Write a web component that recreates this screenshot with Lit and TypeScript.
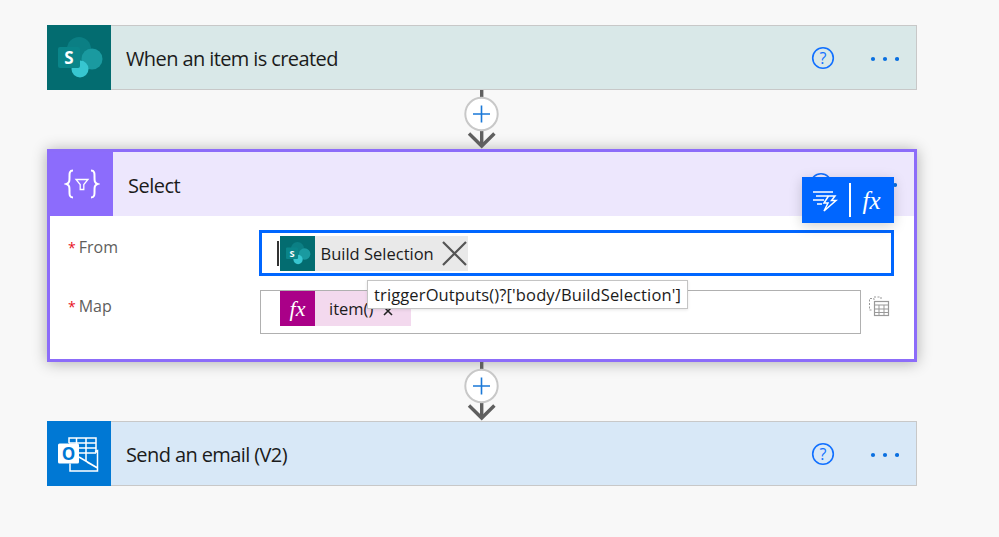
import { LitElement, html, css, svg } from "lit";
import { customElement } from "lit/decorators.js";

const sharepoint = svg`
  <circle cx="32" cy="23" r="12" fill="#0b7f84"/>
  <circle cx="45" cy="33" r="10.5" fill="#1a9aa0"/>
  <circle cx="33" cy="43" r="8.5" fill="#37c6d0"/>
  <rect x="11" y="21" width="22" height="21" rx="2" fill="#0a8589"/>
  <text x="22" y="37.5" text-anchor="middle" font-family="Open Sans" font-weight="700" font-size="17" fill="#fff">S</text>`;

const spIcon = (size: number) => html`<svg class="block" width=${size} height=${size} viewBox="0 0 64 64">${sharepoint}</svg>`;

const actions = html`<svg class="actions" width="88" height="24" viewBox="0 0 88 24">
  <circle cx="12" cy="12" r="10.3" fill="none" stroke="#1170ff" stroke-width="1.6"/>
  <text x="12" y="17.8" text-anchor="middle" font-family="Open Sans" font-size="16" fill="#1170ff">?</text>
  <circle cx="62" cy="13" r="2.1" fill="#0a6fe0"/><circle cx="74" cy="13" r="2.1" fill="#0a6fe0"/><circle cx="86" cy="13" r="2.1" fill="#0a6fe0"/>
</svg>`;

const connector = (h: number) => html`<svg class="connector" width="40" height=${h} viewBox="0 0 40 ${h}">
  <rect x="18" y="0" width="3.4" height="8" fill="#5f5f5f"/>
  <rect x="18" y="40" width="3.4" height="16" fill="#5f5f5f"/>
  <circle cx="19.5" cy="24" r="16.2" fill="#fff" stroke="#c8c8c8" stroke-width="2"/>
  <path d="M11 24h17M19.5 15.5v17" stroke="#1a78d8" stroke-width="1.6" fill="none"/>
  <path d="M7 43.5L19.7 56L32.4 43.5" stroke="#5f5f5f" stroke-width="3.4" fill="none"/>
</svg>`;

@customElement("app-root")
export class AppRoot extends LitElement {
  static styles = css`
    :host { display: block; width: 999px; height: 537px; background: #f8f8f8; overflow: hidden;
      font-family: "Open Sans", "Noto Sans", sans-serif; color: #1b1b1b; }
    .flow { display: flex; flex-direction: column; width: 870px; margin-left: 47px; padding-top: 25px; }
    .block { display: block; }
    .card { box-sizing: border-box; height: 65px; border: 1px solid #c8c8c8; display: flex; align-items: stretch; }
    .card.first { background: #d9e8e8; }
    .card.last { background: #d8e8f7; }
    .iconbox { width: 64px; margin: -1px 0 -1px -1px; display: flex; align-items: center; justify-content: center; flex: none; }
    .teal { background: #036c70; }
    .blue { background: #0078d4; }
    .title { font-size: 20px; line-height: 1; align-self: center; margin-left: 15px; padding-top: 3px; flex: 1; letter-spacing: -0.6px; }
    .select .title { letter-spacing: -0.5px; }
    .actions { align-self: center; margin-right: 17px; display: block; }
    .connector { display: block; align-self: center; position: relative; z-index: 2; }
    .select { position: relative; box-sizing: border-box; height: 213px; border: 3px solid #8c6cf9; background: #fff;
      box-shadow: 0 1px 14px rgba(0,0,0,.3); }
    .select-head { height: 64px; background: #ede7fd; display: flex; }
    .select-head .iconbox { width: 63px; margin: 0; background: #8c6cfc; }
    .select-body { display: grid; grid-template-columns: 209px 1fr; grid-template-rows: 46px 44px; row-gap: 14px; padding-top: 14px; }
    .label { font-size: 16px; color: #605e5c; padding: 6px 0 0 18px; line-height: 20px; }
    .label.top { padding-top: 7px; }
    .label i { color: #e81123; font-style: normal; margin-right: 3px; font-size: 14px; }
    .from { box-sizing: border-box; width: 635px; border: 3px solid #0066ff; display: flex; align-items: center; padding-left: 15px; }
    .caret { width: 1.5px; height: 25px; background: #333; margin-right: 1px; }
    .token { display: flex; align-items: stretch; height: 35px; }
    .token .ticon { width: 35px; display: flex; align-items: center; justify-content: center; }
    .token.sp { background: #e9e9e9; }
    .token.fx { background: #f3d9ee; width: 131px; }
    .token-text { align-self: center; font-size: 16.5px; line-height: 20px; }
    .token.sp .token-text { margin-left: 6px; padding-top: 2px; }
    .token.fx .token-text { margin-left: 14px; }
    .token .x { align-self: center; display: block; }
    .x.big { margin: 0 1px 0 8px; }
    .x.small { margin: 4px 0 0 10px; }
    .map-cell { display: flex; margin-left: 1px; }
    .map { box-sizing: border-box; width: 601px; border: 1px solid #b0b0b0; padding-left: 19px; background: #fff; }
    .fxbox { background: #aa0088; color: #fff; }
    .fxt { font-family: "Liberation Serif", serif; font-style: italic; font-size: 22px; line-height: 1; }
    .cal { margin: 5px 0 0 7px; display: block; }
    .tooltip { position: absolute; left: 317px; top: 128px; height: 29px; box-sizing: border-box; width: 321px; background: #fff;
      border: 1px solid #c4c4c4; font-size: 16.5px; letter-spacing: 0.13px; line-height: 27px; padding-left: 6px; white-space: nowrap; box-shadow: 0 1px 3px rgba(0,0,0,.1); z-index: 3; }
    .pop { position: absolute; left: 752px; top: 25px; width: 92px; height: 46px; background: #0066ff; display: flex; align-items: center;
      box-shadow: 0 3px 12px rgba(0,0,0,.18); z-index: 3; color: #fff; }
    .pop .bolt { margin-left: 10px; display: block; flex: none; }
    .pop .sep { width: 1.5px; height: 34px; background: #fff; margin-left: 11px; }
    .pop .fxt { margin-left: 12px; font-size: 25px; }
  `;

  render() {
    return html`<div class="flow">
      <div class="card first">
        <div class="iconbox teal">${spIcon(64)}</div>
        <div class="title">When an item is created</div>
        ${actions}
      </div>
      ${connector(59)}
      <div class="select">
        <div class="select-head">
          <div class="iconbox">
            <svg class="block" width="36" height="32" viewBox="0 0 36 32" fill="none" stroke="#fff" stroke-width="2">
              <path d="M9 2.5C5 2.5 5.5 6 5.5 9.5C5.5 13 5.5 15 2.5 16C5.5 17 5.5 19 5.5 22.5C5.5 26 5 29.5 9 29.5"/>
              <path d="M27 2.5C31 2.5 30.5 6 30.5 9.5C30.5 13 30.5 15 33.5 16C30.5 17 30.5 19 30.5 22.5C30.5 26 31 29.5 27 29.5"/>
              <path d="M12 11.5H24L19.8 16.5V21.5L16.2 21.5V16.5Z" stroke-width="1.3"/>
            </svg>
          </div>
          <div class="title">Select</div>
          ${actions}
        </div>
        <div class="select-body">
          <div class="label top"><i>*</i>From</div>
          <div class="from">
            <span class="caret"></span>
            <div class="token sp">
              <div class="ticon teal">${spIcon(35)}</div>
              <span class="token-text">Build Selection</span>
              <svg class="x big" width="25" height="25" viewBox="0 0 25 25" stroke="#555" stroke-width="2.2"><path d="M1 1L24 24M24 1L1 24"/></svg>
            </div>
          </div>
          <div class="label"><i>*</i>Map</div>
          <div class="map-cell">
            <div class="map">
              <div class="token fx">
                <div class="ticon fxbox"><span class="fxt">fx</span></div>
                <span class="token-text">item()</span>
                <svg class="x small" width="10" height="10" viewBox="0 0 10 10" stroke="#222" stroke-width="1.6"><path d="M1 1L9 9M9 1L1 9"/></svg>
              </div>
            </div>
            <svg class="cal" width="22" height="22" viewBox="0 0 22 22" fill="none" stroke="#999">
              <path d="M6 5V3.5H1.5V15H4.5" stroke-dasharray="2 1.5"/>
              <path d="M6 2H13V5" stroke-dasharray="2 1.5"/>
              <rect x="6.5" y="6.5" width="14" height="14" stroke-width="1.2"/>
              <path d="M6.5 10H20.5M6.5 14H20.5M6.5 17.5H20.5M11 10V20.5M16 10V20.5" stroke-width="1"/>
            </svg>
          </div>
        </div>
        <div class="tooltip">triggerOutputs()?['body/BuildSelection']</div>
        <div class="pop">
          <svg class="bolt" width="26" height="26" viewBox="0 0 26 26" fill="none" stroke="#fff" stroke-width="1.5">
            <path d="M1 5H21M4 9H16M1 13H12M5 17H10"/>
            <path d="M16.5 9L12 16H16L12 24L24 13.5H19.5L23 9Z"/>
          </svg>
          <span class="sep"></span>
          <span class="fxt">fx</span>
        </div>
      </div>
      ${connector(59)}
      <div class="card last">
        <div class="iconbox blue">
          <svg class="block" width="42" height="38" viewBox="0 0 42 38" fill="none" stroke="#fff" stroke-width="1.5">
            <path d="M11 8V3H38V18M18.5 3V24M28 3V26M11 8H38M18.5 13H38M18.5 18H38"/>
            <path d="M21 22L39.5 33V15.5L37 16.5M12 28.5V36H39.5V33L29 27"/>
            <rect x="0" y="8.5" width="21" height="20" rx="1.5" fill="#fff" stroke="none"/>
            <text x="10.5" y="24.5" text-anchor="middle" font-family="Open Sans" font-weight="700" font-size="17" fill="#0078d4" stroke="none">O</text>
          </svg>
        </div>
        <div class="title">Send an email (V2)</div>
        ${actions}
      </div>
    </div>`;
  }
}
